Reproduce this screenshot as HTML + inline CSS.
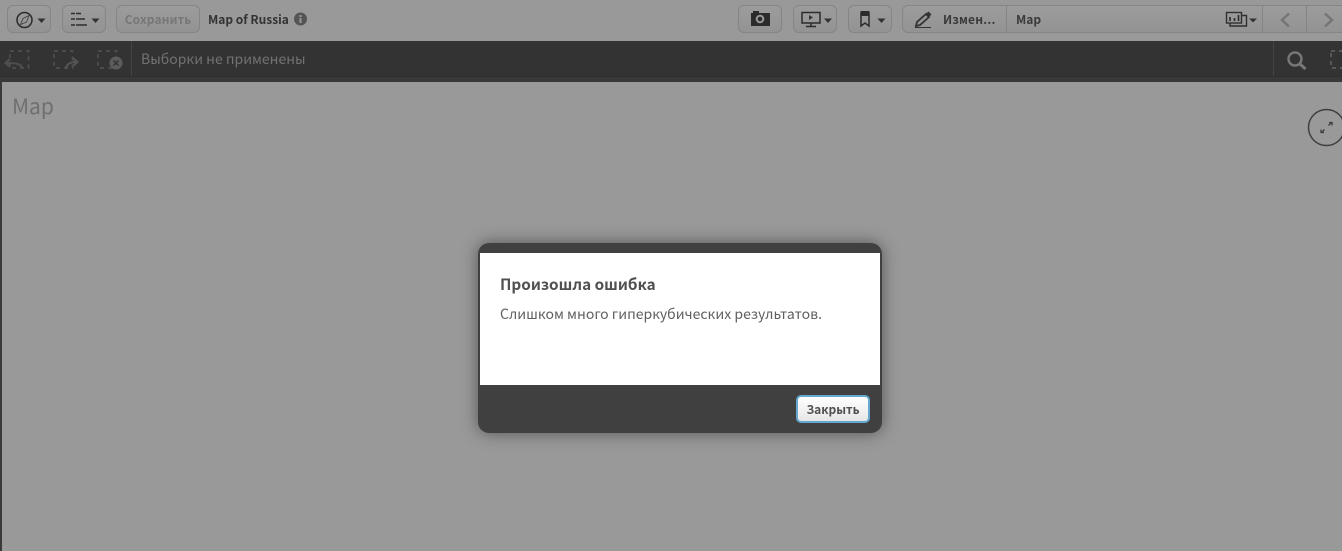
<!DOCTYPE html>
<html lang="ru">
<head>
<meta charset="utf-8">
<title>Map of Russia</title>
<style>
html,body{margin:0;padding:0;width:1342px;height:551px;overflow:hidden;background:#999;font-family:"Noto Sans CJK JP","Liberation Sans",sans-serif}
.a{position:absolute;box-sizing:border-box}
.btn{top:5px;height:28px;border:1px solid #858585;border-radius:6px;background:linear-gradient(#9c9c9c,#939393)}
.t{white-space:nowrap;line-height:1}
svg{position:absolute;overflow:visible}
</style>
</head>
<body>
<div class="a" style="left:0;top:0;width:1342px;height:41px;background:#999"></div>

<div class="a btn" style="left:7px;width:44px"></div>
<div class="a btn" style="left:62px;width:44px"></div>
<div class="a btn t" style="left:116px;width:84px;text-align:center;font-size:12px;font-weight:bold;color:#777;line-height:27px;letter-spacing:.1px">Сохранить</div>
<div class="a t" style="left:208px;top:13.500px;font-size:12px;font-weight:bold;color:#333">Map of Russia</div>

<div class="a btn" style="left:738px;width:44px"></div>
<div class="a btn" style="left:793px;width:44px"></div>
<div class="a btn" style="left:848px;width:44px"></div>
<div class="a btn" style="left:902px;width:105px;border-radius:6px 0 0 6px"></div>
<div class="a t" style="left:943px;top:13.500px;font-size:12px;font-weight:bold;color:#3a3a3a;letter-spacing:.2px">Измен...</div>
<div class="a btn" style="left:1006px;width:257px;border-radius:0"></div>
<div class="a t" style="left:1016px;top:13.500px;font-size:12px;font-weight:bold;color:#3a3a3a">Map</div>
<div class="a btn" style="left:1262px;width:45px;border-radius:0"></div>
<div class="a btn" style="left:1306px;width:40px;border-radius:0;border-right:0"></div>
<svg style="left:0;top:0" width="1342" height="41" fill="none">
  <circle cx="24.500" cy="20" r="7.500" stroke="#2b2b2b" stroke-width="1.500"/>
  <path d="M29 15.500l-6 3-2.500 6 6-2.500z" stroke="#444" stroke-width=".9"/>
  <path d="M37.500 18.500h8l-4 4.500z" fill="#333"/>
  <path d="M71 13.500h4M71 19h4M71 25h4M76 13.500h5M76 19h9M76 25h11" stroke="#2f2f2f" stroke-width="1.500"/>
  <path d="M91.500 18.500h8l-4 4.500z" fill="#333"/>
  <circle cx="300.500" cy="19" r="6.500" fill="#555"/>
  <rect x="299.500" y="18" width="2" height="5" fill="#999"/><rect x="299.500" y="15" width="2" height="2" fill="#999"/>
  <path d="M751 13h2v-2h6v2h11v13h-19z" fill="#2b2b2b"/>
  <circle cx="760" cy="19" r="4.300" fill="#999"/><circle cx="760" cy="19" r="2.300" fill="#2b2b2b"/>
  <rect x="802" y="12.500" width="18" height="10.500" stroke="#2b2b2b" stroke-width="1.500"/>
  <path d="M809 15l4 2.500-4 2.500z" fill="#333"/>
  <path d="M811 23v3M806 26.500h10" stroke="#2b2b2b" stroke-width="1.500"/>
  <path d="M824 18.500h8l-4 4.500z" fill="#333"/>
  <path d="M861 13.500h8v12.500l-4-3-4 3z" stroke="#2b2b2b" stroke-width="1.500"/>
  <rect x="860.500" y="11" width="9" height="5" fill="#2b2b2b"/>
  <path d="M877.500 18.500h8l-4 4.500z" fill="#333"/>
  <path d="M916 26l1-4 9-8 3 3-9 8z" stroke="#333" stroke-width="1.800"/>
  <path d="M925 14.500l3.500-3 3 3-3 3z" fill="#333"/>
  <path d="M915 27.500h16" stroke="#333" stroke-width="1"/>
  <rect x="1226.500" y="12.500" width="15" height="10.500" stroke="#2f2f2f" stroke-width="1.400"/>
  <path d="M1242 15.500h4.500v10.500h-16.500v-3" stroke="#2f2f2f" stroke-width="1.400"/>
  <path d="M1230 17v4M1234.500 18v3M1238.500 15v6" stroke="#2f2f2f" stroke-width="1.700"/>
  <path d="M1249 18.500h8l-4 4z" fill="#333"/>
  <path d="M1289 13.500l-7 6.500 7 6.500" stroke="#757575" stroke-width="2.500"/>
  <path d="M1325 13.500l7 6.500-7 6.500" stroke="#757575" stroke-width="2.500"/>
</svg>

<!-- selection bar -->
<div class="a" style="left:0;top:41px;width:1342px;height:41px;background:#333;border-bottom:5px solid #383838;box-shadow:inset 0 -1px 0 #2f2f2f"></div>
<div class="a" style="left:131px;top:41px;width:1px;height:35px;background:#444"></div>
<div class="a" style="left:1273px;top:41px;width:1px;height:35px;background:#444"></div>
<div class="a t" style="left:141px;top:52px;font-size:14px;color:#727272">Выборки не применены</div>
<svg style="left:0;top:41px" width="1342" height="41" fill="none">
  <rect x="10" y="10" width="18.500" height="17" stroke="#4f4f4f" stroke-width="1.700" stroke-dasharray="4 4"/>
  <path d="M22 27c-1-4-5-5-16-5M10 18l-4.500 4 4.500 4" stroke="#4f4f4f" stroke-width="2"/>
  <rect x="54" y="10" width="18.500" height="17" stroke="#4f4f4f" stroke-width="1.700" stroke-dasharray="4 4"/>
  <path d="M66 27c1-4 4-6 11-6M73 17l4.500 4-4.500 4" stroke="#555" stroke-width="2"/>
  <rect x="98" y="10" width="18.500" height="17" stroke="#4f4f4f" stroke-width="1.700" stroke-dasharray="4 4"/>
  <circle cx="116" cy="22" r="6.500" fill="#5c5c5c"/>
  <path d="M113.500 19.500l5 5M118.500 19.500l-5 5" stroke="#333" stroke-width="1.500"/>
  <circle cx="1295" cy="18" r="6.500" stroke="#777" stroke-width="2.400"/>
  <path d="M1300 23l5.500 5" stroke="#777" stroke-width="3"/>
  <rect x="1331" y="10" width="18" height="17" stroke="#5f5f5f" stroke-width="1.700" stroke-dasharray="4 4"/>
</svg>

<!-- content -->
<div class="a" style="left:0;top:82px;width:2px;height:469px;background:#3a3a3a"></div>
<div class="a t" style="left:12px;top:96px;font-size:21px;color:#6f6f6f">Map</div>
<svg style="left:0;top:100px" width="1342" height="50" fill="none">
  <circle cx="1326.500" cy="27.500" r="18" stroke="#3f3f3f" stroke-width="1.500"/>
  <path d="M1328.500 25.500l3-3M1329 22.500h3v3M1324.500 29.500l-3 3M1324 32.500h-3v-3" stroke="#3f3f3f" stroke-width="1.300"/>
</svg>

<!-- dialog -->
<div class="a" style="left:478px;top:243px;width:404px;height:190px;background:#404040;border-radius:11px;box-shadow:0 0 16px rgba(30,30,30,.55)"></div>
<div class="a" style="left:480px;top:253px;width:400px;height:132px;background:#fff"></div>
<div class="a t" style="left:500px;top:277px;font-size:15.300px;font-weight:bold;color:#505050">Произошла ошибка</div>
<div class="a t" style="left:500px;top:307px;font-size:14.050px;color:#5f5f5f">Слишком много гиперкубических результатов.</div>
<div class="a t" style="left:796px;top:395px;width:74px;height:28px;border:2px solid #63a8cf;border-radius:5px;background:linear-gradient(#fff,#e6e6e6);text-align:center;font-size:12px;font-weight:bold;color:#505050;line-height:25px">Закрыть</div>
</body>
</html>
